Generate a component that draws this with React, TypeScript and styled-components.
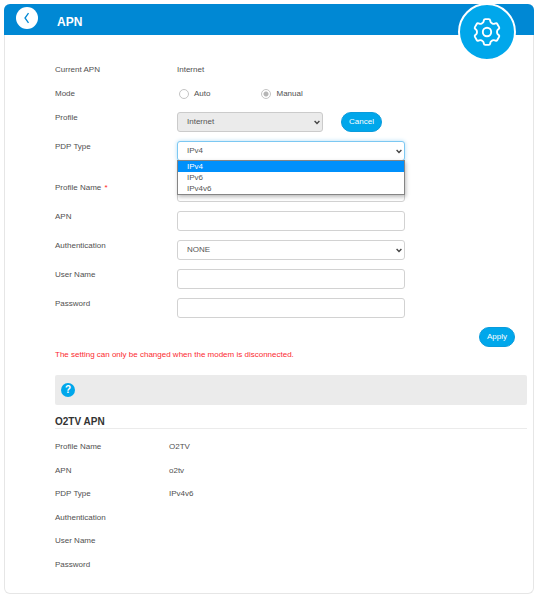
import React, { useState } from "react";
import styled, { createGlobalStyle, css } from "styled-components";

const GlobalStyle = createGlobalStyle`
  *, *::before, *::after { box-sizing: border-box; }
  body {
    margin: 0;
    background: #fff;
    color: #505050;
    font: 8px/12px "Liberation Sans", Arial, sans-serif;
  }
`;

const accent = "#00a7eb";
const headerBlue = "#0088d4";

const Page = styled.main`
  padding: 4px 6px 6px 4px;
`;

const Card = styled.section`
  border: 1px solid #e6e6e6;
  border-top: 0;
  border-radius: 6px;
`;

const Header = styled.header`
  position: relative;
  display: flex;
  align-items: flex-start;
  gap: 19px;
  min-height: 31px;
  margin: 0 -1px;
  padding: 3px 12px 0;
  border-radius: 6px 6px 0 0;
  background: ${headerBlue};
`;

const BackButton = styled.button`
  display: grid;
  place-items: center;
  width: 22px;
  height: 22px;
  padding: 0;
  border: 0;
  border-radius: 50%;
  background: #fff;
`;

const Title = styled.h1`
  margin: 0;
  padding-top: 7px;
  color: #fff;
  font-size: 12px;
  line-height: 16px;
`;

const GearBadge = styled.div`
  position: absolute;
  top: -1px;
  right: 18px;
  display: grid;
  place-items: center;
  width: 58px;
  height: 58px;
  border: 2px solid #fff;
  border-radius: 50%;
  background: ${accent};
`;

const Content = styled.div`
  padding: 29px 6px 22px 50px;
`;

const Form = styled.form`
  display: flex;
  flex-direction: column;
`;

const Row = styled.div<{ $kind?: "text" | "control" | "open" }>`
  display: grid;
  grid-template-columns: 122px 228fr 122fr;
  align-items: start;
  min-height: ${({ $kind = "control" }) => ({ text: 24, control: 29, open: 41 })[$kind]}px;
`;

const Required = styled.span`
  padding-left: 1px;
  color: #f22;
`;

const RadioGroup = styled.div`
  display: flex;
  gap: 51px;
  padding-left: 2px;
`;

const RadioLabel = styled.label`
  display: flex;
  align-items: center;
  gap: 5px;
`;

const Radio = styled.input`
  appearance: none;
  width: 10px;
  height: 10px;
  margin: 0;
  border: 1px solid #c4c4c4;
  border-radius: 50%;
  background: #fff;
  &:checked {
    background: radial-gradient(circle, #b5b5b5 0 2px, #fff 3px);
  }
`;

const field = css`
  display: block;
  width: 100%;
  height: 20px;
  margin: 0;
  padding: 0 9px;
  border: 1px solid #d2d2d2;
  border-radius: 3px;
  background: #fff;
  color: #555;
  font: inherit;
  outline: 0;
`;

const TextInput = styled.input`
  ${field}
`;

const SelectBox = styled.div`
  position: relative;
  flex: 0 1 146px;
`;

const Select = styled.select<{ $active?: boolean }>`
  ${field}
  appearance: none;
  opacity: 1;
  ${({ $active }) =>
    $active &&
    css`
      border-color: #7cc8f2;
      box-shadow: 0 0 4px #b5def5;
    `}
  &:disabled {
    background: #ebebeb;
    border-color: #cbcbcb;
  }
`;

const SelectArrow = styled.svg`
  position: absolute;
  top: 8px;
  right: 3px;
  pointer-events: none;
`;

const OptionList = styled.ul`
  position: absolute;
  z-index: 1;
  top: 19px;
  left: 0;
  right: 0;
  margin: 0;
  padding: 0;
  list-style: none;
  border: 1px solid #858585;
  background: #fff;
  box-shadow: 1px 2px 4px #0004;
`;

const OptionItem = styled.li<{ $selected: boolean }>`
  padding: 0 9px;
  line-height: 11px;
  color: ${({ $selected }) => ($selected ? "#fff" : "#555")};
  background: ${({ $selected }) => ($selected ? "#0090fb" : "transparent")};
`;

const Inline = styled.div`
  display: flex;
  gap: 18px;
`;

const PillButton = styled.button`
  flex: none;
  height: 20px;
  padding: 0 7px;
  border: 1px solid #0a9bdc;
  border-radius: 10px;
  background: ${accent};
  color: #fff;
  font: inherit;
`;

const Actions = styled.div`
  display: flex;
  justify-content: flex-end;
  padding-right: 12px;
`;

const Warning = styled.p`
  margin: 2px 0 0;
  color: #fb2a30;
`;

const HelpBar = styled.div`
  display: flex;
  align-items: center;
  height: 30px;
  margin-top: 14px;
  padding: 0 6px;
  border-radius: 2px;
  background: #ebebeb;
`;

const HelpButton = styled.button`
  width: 14px;
  height: 14px;
  padding: 0;
  border: 0;
  border-radius: 50%;
  background: ${accent};
  color: #fff;
  font: bold 10px/14px "Liberation Sans", Arial, sans-serif;
`;

const SectionTitle = styled.h2`
  margin: 11px 0 0;
  border-bottom: 1px solid #ebebeb;
  color: #333;
  font-size: 10px;
  line-height: 12px;
`;

const Details = styled.dl`
  display: flex;
  flex-direction: column;
  justify-content: space-between;
  min-height: 130px;
  margin: 12px 0 0;
`;

const Detail = styled.div`
  display: grid;
  grid-template-columns: 114px 1fr;
  dd { margin: 0; }
`;

type Point = [number, number];

// Six-tooth gear outline centred on the origin, with rounded corners.
function gearPath() {
  const tooth: Point[] = [[-3.5, -9.6], [-3, -12.9], [3, -12.9], [3.5, -9.6]];
  const points = Array.from({ length: 6 }, (_, i) => {
    const a = (i * Math.PI) / 3;
    return tooth.map(([x, y]): Point => [
      x * Math.cos(a) - y * Math.sin(a),
      x * Math.sin(a) + y * Math.cos(a),
    ]);
  }).flat();
  const toward = (a: Point, b: Point, r: number): Point => {
    const d = Math.hypot(b[0] - a[0], b[1] - a[1]);
    return [a[0] + ((b[0] - a[0]) * r) / d, a[1] + ((b[1] - a[1]) * r) / d];
  };
  const n = points.length;
  return (
    points
      .map((p, i) => {
        const from = toward(p, points[(i + n - 1) % n], 1.2);
        const to = toward(p, points[(i + 1) % n], 1.2);
        return `${i ? "L" : "M"}${from} Q${p} ${to}`;
      })
      .join(" ") + "Z"
  );
}

const GearIcon = () => (
  <svg width="30" height="30" viewBox="-15 -15 30 30" fill="none" stroke="#fff" strokeWidth="1.9" aria-hidden="true">
    <path d={gearPath()} />
    <circle r="4.2" />
  </svg>
);

const Arrow = () => (
  <SelectArrow width="6" height="5" viewBox="0 0 6 5" fill="none" stroke="#444" strokeWidth="1.4" aria-hidden="true">
    <path d="M.6 1 3 3.4 5.4 1" />
  </SelectArrow>
);

const pdpTypes = ["IPv4", "IPv6", "IPv4v6"];

const details = [
  ["Profile Name", "O2TV"],
  ["APN", "o2tv"],
  ["PDP Type", "IPv4v6"],
  ["Authentication", ""],
  ["User Name", ""],
  ["Password", ""],
];

export default function App() {
  const [pdp, setPdp] = useState("IPv4");

  return (
    <>
      <GlobalStyle />
      <Page>
        <Card>
          <Header>
            <BackButton type="button" aria-label="Back">
              <svg width="8" height="12" viewBox="0 0 8 12" fill="none" stroke={headerBlue} strokeWidth="1.3" aria-hidden="true">
                <path d="M5.5 1.2 2 6l3.5 4.8" />
              </svg>
            </BackButton>
            <Title>APN</Title>
            <GearBadge>
              <GearIcon />
            </GearBadge>
          </Header>
          <Content>
            <Form onSubmit={(e) => e.preventDefault()}>
              <Row $kind="text">
                <span>Current APN</span>
                <span>Internet</span>
              </Row>
              <Row $kind="text">
                <span id="mode">Mode</span>
                <RadioGroup role="radiogroup" aria-labelledby="mode">
                  <RadioLabel>
                    <Radio type="radio" name="mode" disabled />
                    Auto
                  </RadioLabel>
                  <RadioLabel>
                    <Radio type="radio" name="mode" defaultChecked disabled />
                    Manual
                  </RadioLabel>
                </RadioGroup>
              </Row>
              <Row>
                <label htmlFor="profile">Profile</label>
                <Inline>
                  <SelectBox>
                    <Select id="profile" disabled>
                      <option>Internet</option>
                    </Select>
                    <Arrow />
                  </SelectBox>
                  <PillButton type="button">Cancel</PillButton>
                </Inline>
              </Row>
              <Row $kind="open">
                <label htmlFor="pdp">PDP Type</label>
                <SelectBox>
                  <Select id="pdp" $active value={pdp} onChange={(e) => setPdp(e.target.value)}>
                    {pdpTypes.map((t) => (
                      <option key={t}>{t}</option>
                    ))}
                  </Select>
                  <Arrow />
                  <OptionList role="listbox" aria-label="PDP Type">
                    {pdpTypes.map((t) => (
                      <OptionItem key={t} role="option" aria-selected={t === pdp} $selected={t === pdp} onClick={() => setPdp(t)}>
                        {t}
                      </OptionItem>
                    ))}
                  </OptionList>
                </SelectBox>
              </Row>
              <Row>
                <label htmlFor="name">
                  Profile Name <Required>*</Required>
                </label>
                <TextInput id="name" required />
              </Row>
              <Row>
                <label htmlFor="apn">APN</label>
                <TextInput id="apn" />
              </Row>
              <Row>
                <label htmlFor="auth">Authentication</label>
                <SelectBox>
                  <Select id="auth">
                    <option>NONE</option>
                  </Select>
                  <Arrow />
                </SelectBox>
              </Row>
              <Row>
                <label htmlFor="user">User Name</label>
                <TextInput id="user" />
              </Row>
              <Row>
                <label htmlFor="password">Password</label>
                <TextInput id="password" type="password" />
              </Row>
              <Actions>
                <PillButton type="submit">Apply</PillButton>
              </Actions>
            </Form>
            <Warning>The setting can only be changed when the modem is disconnected.</Warning>
            <HelpBar>
              <HelpButton type="button" aria-label="Help">?</HelpButton>
            </HelpBar>
            <SectionTitle>O2TV APN</SectionTitle>
            <Details>
              {details.map(([label, value]) => (
                <Detail key={label}>
                  <dt>{label}</dt>
                  <dd>{value}</dd>
                </Detail>
              ))}
            </Details>
          </Content>
        </Card>
      </Page>
    </>
  );
}
